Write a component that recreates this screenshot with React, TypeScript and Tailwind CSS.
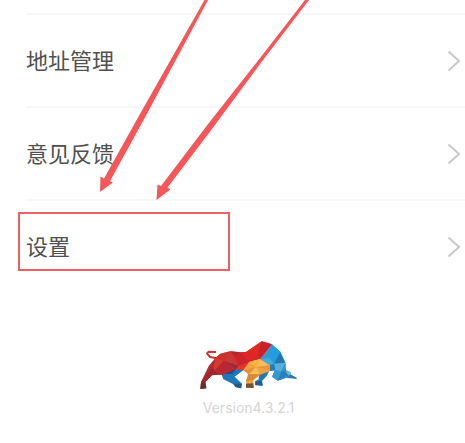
import React from 'react';

interface MenuItem {
  id: string;
  label: string;
  highlighted?: boolean;
}

const MENU: MenuItem[] = [
  { id: 'address', label: '地址管理' },
  { id: 'feedback', label: '意见反馈' },
  { id: 'settings', label: '设置', highlighted: true },
];

const ChevronIcon = () => (
  <svg width="14" height="22" viewBox="0 0 14 22" fill="none" stroke="#c9c9c9" strokeWidth="2" aria-hidden="true">
    <path d="M1.5 1.5 12 11 1.5 20.5" />
  </svg>
);

const BullLogo = () => (
  <svg width="99" height="50" viewBox="27 30 297 150" role="img" aria-label="Logo">
    {/* tail */}
    <path d="M80 85 60 81 51 70 56 65 78 66" fill="none" stroke="#c8382f" strokeWidth="6" strokeLinejoin="round" />
    {/* far legs */}
    <path d="M94 132 138 115 160 121 134 140 156 161 154 175 137 172 129 162 100 148Z" fill="#1f78b8" />
    <path d="M94 132 138 117 128 131Z" fill="#174f86" />
    <path d="M131 161 155 161 153 175 137 171Z" fill="#235a8c" />
    <path d="M208 124 240 118 230 138 216 153 218 167 195 165 195 154 206 148Z" fill="#2679b8" />
    <path d="M197 154 216 153 218 167 196 165Z" fill="#285d91" />
    {/* back and rump */}
    <path d="M76 84 91 71 121 64 151 67 168 66 215 34 246 43 211 87 178 96 160 121 138 117 96 134 62 134Z" fill="#d6282b" />
    <path d="M76 84 91 71 121 64 101 93Z" fill="#ca322b" />
    <path d="M121 64 151 67 136 79Z" fill="#ac2930" />
    <path d="M101 93 121 64 146 107Z" fill="#cb3934" />
    <path d="M76 84 101 93 62 134Z" fill="#d83b2e" />
    <path d="M101 93 138 117 96 134 62 134Z" fill="#b62834" />
    <path d="M101 93 146 107 138 117Z" fill="#99293d" />
    <path d="M168 66 215 34 204 70Z" fill="#e02b24" />
    <path d="M215 34 246 43 211 87 204 70Z" fill="#c9202b" />
    <path d="M151 67 168 66 204 70 178 96Z" fill="#e02524" />
    <path d="M136 79 151 67 178 96 146 107Z" fill="#cc242d" />
    <path d="M146 107 178 96 160 121 138 117Z" fill="#e03729" />
    {/* hind leg */}
    <path d="M76 84 68 134 46 156 49 175 31 177 33 156 56 108Z" fill="#bd2b2c" />
    <path d="M66 109 82 134 66 136 46 156 33 156Z" fill="#9f2730" />
    <path d="M33 158 46 156 49 175 31 177Z" fill="#652d2d" />
    {/* belly and front leg */}
    <path d="M160 121 178 96 211 87 240 106 240 123 210 134 190 151 191 174 168 173 168 154 174 132Z" fill="#f0a73e" />
    <path d="M178 96 211 87 198 111Z" fill="#f6b33e" />
    <path d="M160 121 198 111 178 132Z" fill="#ed8c3a" />
    <path d="M211 87 240 106 198 111Z" fill="#f4bd5d" />
    <path d="M198 111 240 106 240 123Z" fill="#e99742" />
    <path d="M178 132 198 111 208 132Z" fill="#f7c059" />
    <path d="M176 132 209 133 190 151 168 154Z" fill="#d98937" />
    <path d="M168 161 190 160 191 174 168 173Z" fill="#765234" />
    {/* shoulder and head */}
    <path d="M246 43 271 66 286 98 288 121 302 127 300 143 286 144 263 152 246 140 254 121 240 123 240 106 211 87Z" fill="#279adb" />
    <path d="M246 43 238 84 211 87Z" fill="#3598ce" />
    <path d="M246 43 271 66 252 101 238 84Z" fill="#229de0" />
    <path d="M271 66 286 98 252 101Z" fill="#2576ac" />
    <path d="M211 87 238 84 252 101 240 106Z" fill="#42ace0" />
    <path d="M252 101 286 98 274 124 256 121Z" fill="#58afdc" />
    <path d="M286 98 288 121 274 124Z" fill="#3b93c8" />
    <path d="M240 106 252 101 256 121 240 123Z" fill="#227fba" />
    <path d="M256 121 274 124 263 152 246 140Z" fill="#359bd2" />
    <path d="M274 124 288 121 286 144 263 152Z" fill="#2880b8" />
    {/* horns */}
    <path d="M281 124 294 122 301 133 320 143 320 147 294 144Z" fill="#3377ac" />
    <path d="M286 124 298 124 303 132 296 137Z" fill="#71b6da" />
  </svg>
);

// Arrows drawn over the list, both pointing at the highlighted entry
const Arrows = () => (
  <svg className="pointer-events-none absolute top-0 left-0" width="320" height="204" fill="#f75658" aria-hidden="true">
    <path d="M204.5 0H208L143 121 110 181 112.7 182.5 100 192 100.5 176.5 104 178.5 136 121Z" />
    <path d="M305 0H309L263 60 210 131.5 167.5 187.5 170.3 189.5 156.5 200 157.5 184.5 161 186 210 121.5 258.5 60Z" />
  </svg>
);

const MenuRow: React.FC<{ item: MenuItem }> = ({ item }) => (
  <li className="relative h-[93px] border-t-2 border-[#f7f7f7]">
    <button type="button" className="flex h-full w-full items-center justify-between pr-1 text-left">
      <span className="pb-1 text-[22px] leading-8 text-[#505050]">{item.label}</span>
      <ChevronIcon />
    </button>
    {item.highlighted && (
      <div className="pointer-events-none absolute top-[11px] -left-2 h-[59px] w-[212px] border-2 border-[#ee6064]" />
    )}
  </li>
);

export default function App() {
  return (
    <main className="relative min-h-screen overflow-hidden bg-white pt-[13px] font-['Noto_Sans_CJK_SC',sans-serif]">
      <ul className="pl-[26px]">
        {MENU.map((item) => (
          <MenuRow key={item.id} item={item} />
        ))}
      </ul>

      <footer className="mt-12 flex flex-col items-center gap-2 pr-8 pl-16">
        <BullLogo />
        <p className="font-['Inter',sans-serif] text-sm text-[#d5d5d5]">Version4.3.2.1</p>
      </footer>

      <Arrows />
    </main>
  );
}
